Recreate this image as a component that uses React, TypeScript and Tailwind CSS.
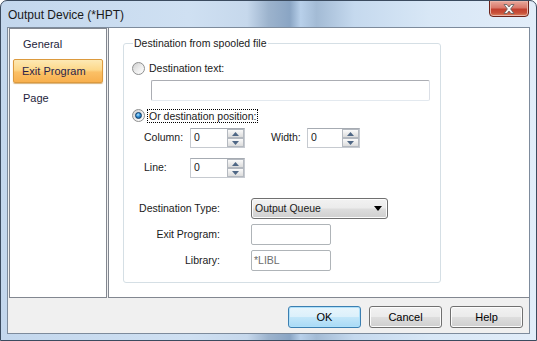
import React from "react";

function Radio({ checked }: { checked?: boolean }) {
  return (
    <span className="flex h-[13px] w-[13px] shrink-0 items-center justify-center rounded-full border border-[#8e8f8f] bg-[linear-gradient(135deg,#cfcfcf_0%,#eeeeee_55%,#ffffff_100%)]">
      {checked && (
        <span className="h-[7px] w-[7px] rounded-full border border-[#0c3a66] bg-[radial-gradient(circle_at_40%_35%,#b5e4ff_0%,#2f8fd6_45%,#0d4a82_100%)]" />
      )}
    </span>
  );
}

function SpinArrow({ up }: { up?: boolean }) {
  return (
    <span className="flex flex-1 items-center justify-center border border-[#b4b9c0] bg-[linear-gradient(180deg,#fafafa_0%,#ebebeb_50%,#dcdcdc_100%)]">
      <svg width="7" height="4" viewBox="0 0 7 4">
        {up ? (
          <path d="M0 4 L3.5 0 L7 4 Z" fill="#4f6785" />
        ) : (
          <path d="M0 0 L3.5 4 L7 0 Z" fill="#4f6785" />
        )}
      </svg>
    </span>
  );
}

function Spinner({ w }: { w: string }) {
  return (
    <div className={`flex h-[20px] ${w} border border-[#c6cad0] border-t-[#a6abb2] bg-white`}>
      <span className="flex-1 pl-[3px] leading-[17px]">0</span>
      <div className="flex w-[17px] flex-col">
        <SpinArrow up />
        <SpinArrow />
      </div>
    </div>
  );
}

function Btn({ label, primary }: { label: string; primary?: boolean }) {
  return (
    <button
      className={`flex h-[22px] w-[73px] items-center justify-center rounded-[3px] border text-[11px] text-black ${
        primary
          ? "border-[#3c7fb1] bg-[linear-gradient(180deg,#e8f5fc_0%,#dcf0fb_48%,#c2e6f9_52%,#a9daf6_100%)] shadow-[inset_0_0_0_1px_#aee0fa]"
          : "border-[#707070] bg-[linear-gradient(180deg,#f2f2f2_0%,#ebebeb_48%,#dddddd_52%,#cfcfcf_100%)] shadow-[inset_0_0_0_1px_#fcfcfc]"
      }`}
    >
      {label}
    </button>
  );
}

export default function App() {
  return (
    <div
      className="flex h-[341px] w-[537px] flex-col overflow-hidden rounded-t-[7px] border border-[#3b4b5f] bg-[linear-gradient(90deg,#c3d7ed_0%,#cfe0f2_35%,#c6d8ec_46%,#9cb3cd_50%,#8aa5c4_54%,#b8d0ea_56%,#a3bbd5_59%,#c5d9ee_66%,#d8e7f6_80%,#e2edf9_100%)]"
      style={{ fontFamily: '"Liberation Sans", Arial, sans-serif' }}
    >
      {/* title bar */}
      <div className="relative flex h-[26px] shrink-0 items-center pl-[7px] pt-[1px]">
        <span className="text-[12px] text-[#1a1a1a]">Output Device (*HPT)</span>
        <div className="absolute right-[7px] top-[-1px] flex h-[17px] w-[40px] items-center justify-center rounded-b-[4px] border border-[#6b231b] bg-[linear-gradient(180deg,#e9a99c_0%,#d9786a_45%,#c2402f_55%,#c8513a_80%,#e08a63_100%)] shadow-[inset_0_0_0_1px_#eab3a8]">
          <svg width="12" height="10" viewBox="0 0 12 10">
            <path
              d="M1 0.5 H4 L6 3 L8 0.5 H11 L7.6 5 L11 9.5 H8 L6 7 L4 9.5 H1 L4.4 5 Z"
              fill="#f4f4f4"
              stroke="#5d5d5d"
              strokeWidth="0.8"
            />
          </svg>
        </div>
      </div>

      {/* client area */}
      <div className="ml-[6px] flex h-[307px] w-[523px] flex-col border border-[#7d8b9c] bg-[#f0f0f0] text-[10.5px] text-[#1a1a1a]">
        <div className="flex h-[270px]">
          {/* navigation */}
          <div className="ml-[1px] flex h-[270px] w-[98px] flex-col gap-[3px] border border-[#828790] bg-white px-[3px] pt-[3px] text-[11px]">
            <div className="flex h-[24px] items-center pl-[10px] text-[#1e1e3c]">General</div>
            <div className="flex h-[24px] items-center rounded-[2px] border border-[#dc9a3e] bg-[linear-gradient(180deg,#fde9b4_0%,#fdd88a_45%,#fbc066_55%,#f8b04e_100%)] pl-[8px] text-[#2a1f4a] shadow-[0_1px_1px_#d8b27a]">
              Exit Program
            </div>
            <div className="flex h-[24px] items-center pl-[10px] text-[#1e1e3c]">Page</div>
          </div>

          {/* right panel */}
          <div className="ml-[1px] h-[270px] flex-1 border-b border-l border-[#828790] bg-white">
            <div className="relative ml-[14px] mt-[15px] flex h-[240px] w-[318px] flex-col rounded-[3px] border border-[#d5dfe5] pl-[8px] pt-[18px]">
              <span className="absolute left-[9px] top-[-7px] bg-white px-[1px] leading-[13px]">
                Destination from spooled file
              </span>

              <div className="flex h-[13px] items-center gap-[4px]">
                <Radio />
                <span>Destination text:</span>
              </div>
              <div className="ml-[19px] mt-[5px] h-[21px] w-[279px] rounded-[2px] border border-[#abadb3] border-b-[#e3e9ef] border-r-[#dbdfe6] bg-white" />

              <div className="mt-[8px] flex h-[13px] items-center gap-[2px]">
                <Radio checked />
                <span className="border border-dotted border-black px-[1px] leading-[12px]">
                  Or destination position:
                </span>
              </div>

              <div className="mt-[6px] flex h-[20px] items-center">
                <span className="ml-[12px] w-[46px]">Column:</span>
                <Spinner w="w-[55px]" />
                <span className="ml-[26px] w-[36px]">Width:</span>
                <Spinner w="w-[53px]" />
              </div>
              <div className="mt-[10px] flex h-[20px] items-center">
                <span className="ml-[12px] w-[46px]">Line:</span>
                <Spinner w="w-[55px]" />
              </div>

              <div className="mt-[20px] flex h-[21px] items-center">
                <span className="w-[88px] whitespace-nowrap text-right">Destination Type:</span>
                <div className="ml-[31px] flex h-[21px] w-[137px] items-center justify-between rounded-[3px] border border-[#707070] bg-[linear-gradient(180deg,#f2f2f2_0%,#ebebeb_48%,#dddddd_52%,#cfcfcf_100%)] pl-[3px] pr-[5px] shadow-[inset_0_0_0_1px_#fcfcfc]">
                  <span>Output Queue</span>
                  <svg width="8" height="5" viewBox="0 0 8 5">
                    <path d="M0 0 H8 L4 5 Z" fill="#000" />
                  </svg>
                </div>
              </div>
              <div className="mt-[5px] flex h-[21px] items-center">
                <span className="w-[88px] text-right">Exit Program:</span>
                <div className="ml-[31px] h-[21px] w-[80px] rounded-[2px] border border-[#afb4b8] bg-white" />
              </div>
              <div className="mt-[5px] flex h-[21px] items-center">
                <span className="w-[88px] text-right">Library:</span>
                <div className="ml-[31px] flex h-[21px] w-[80px] items-center rounded-[2px] border border-[#afb4b8] bg-white pl-[2px] text-[#6d6d6d]">
                  *LIBL
                </div>
              </div>
            </div>
          </div>
        </div>

        {/* buttons */}
        <div className="mt-[8px] flex justify-end gap-[8px] pr-[6px]">
          <Btn label="OK" primary />
          <Btn label="Cancel" />
          <Btn label="Help" />
        </div>
      </div>
    </div>
  );
}
